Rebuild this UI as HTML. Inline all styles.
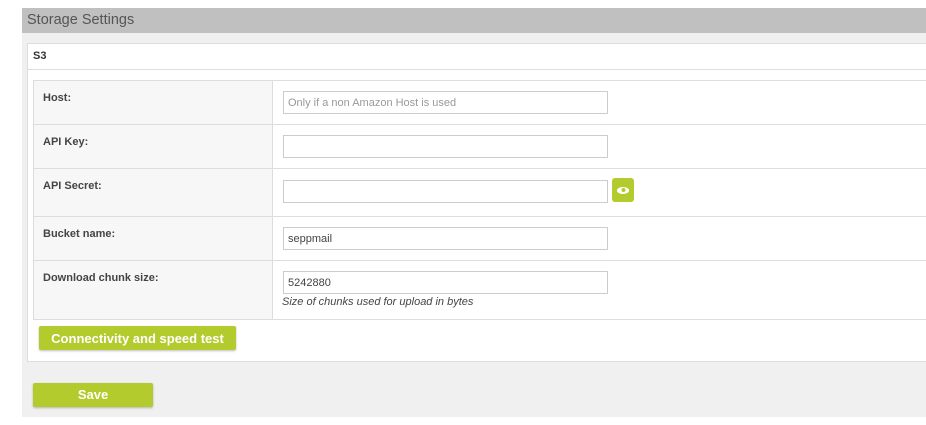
<!DOCTYPE html>
<html><head><style>
*{box-sizing:border-box;margin:0;padding:0}
body{width:926px;height:425px;background:#fff;font-family:"Liberation Sans",sans-serif;position:relative;overflow:hidden}
.abs{position:absolute}
.panel{left:22px;top:8px;width:904px;height:409px;background:#f0f0f0}
.hdr{left:22px;top:8px;width:904px;height:25px;background:#c0c0c0;color:#555;font-size:14.5px;padding:4px 0 0 5px}
.box{left:27px;top:43px;width:905px;height:319px;background:#fff;border:1px solid #ddd}
.s3{left:28px;top:44px;width:900px;height:26px;border-bottom:1px solid #ddd;font-size:11px;font-weight:bold;color:#333;padding:6px 0 0 5px}
.row{left:33px;width:900px;border:1px solid #ddd;border-top:none;background:#fff}
.lab{position:absolute;left:0;top:0;bottom:0;width:239px;background:#f7f7f7;border-right:1px solid #ddd;font-size:11px;font-weight:bold;color:#444;padding:11px 0 0 9px}
.inp{position:absolute;left:249px;width:325px;height:23px;border:1px solid #ccc;background:#fff;font-size:11px;color:#444;padding:5px 0 0 4px}
.btn{background:#b3cb2d;color:#fff;font-weight:bold;font-size:13px;text-align:center;border-radius:2px;box-shadow:0 1px 2px rgba(0,0,0,.25)}
</style></head><body>
<div class="abs panel"></div>
<div class="abs hdr">Storage Settings</div>
<div class="abs box"></div>
<div class="abs s3">S3</div>
<div class="abs row" style="top:80px;height:45px;border-top:1px solid #ddd"><div class="lab">Host:</div><div class="inp" style="top:10px;color:#999">Only if a non Amazon Host is used</div></div>
<div class="abs row" style="top:125px;height:44px"><div class="lab">API Key:</div><div class="inp" style="top:10px"></div></div>
<div class="abs row" style="top:169px;height:48px"><div class="lab">API Secret:</div><div class="inp" style="top:11px"></div>
<div style="position:absolute;left:578px;top:9px;width:22px;height:24px;background:#b3cb2d;border-radius:3px"><svg width="22" height="24" viewBox="0 0 22 24"><ellipse cx="11" cy="12.5" rx="6" ry="3.5" fill="#fff"/><circle cx="11.5" cy="12" r="2" fill="#b3cb2d"/></svg></div></div>
<div class="abs row" style="top:217px;height:44px"><div class="lab">Bucket name:</div><div class="inp" style="top:10px">seppmail</div></div>
<div class="abs row" style="top:261px;height:59px"><div class="lab">Download chunk size:</div><div class="inp" style="top:10px">5242880</div>
<div style="position:absolute;left:248px;top:35px;font-size:11px;font-style:italic;color:#444">Size of chunks used for upload in bytes</div></div>
<div class="abs btn" style="left:39px;top:326px;width:197px;height:24px;line-height:25px">Connectivity and speed test</div>
<div class="abs btn" style="left:33px;top:383px;width:120px;height:24px;line-height:23px">Save</div>
</body></html>
